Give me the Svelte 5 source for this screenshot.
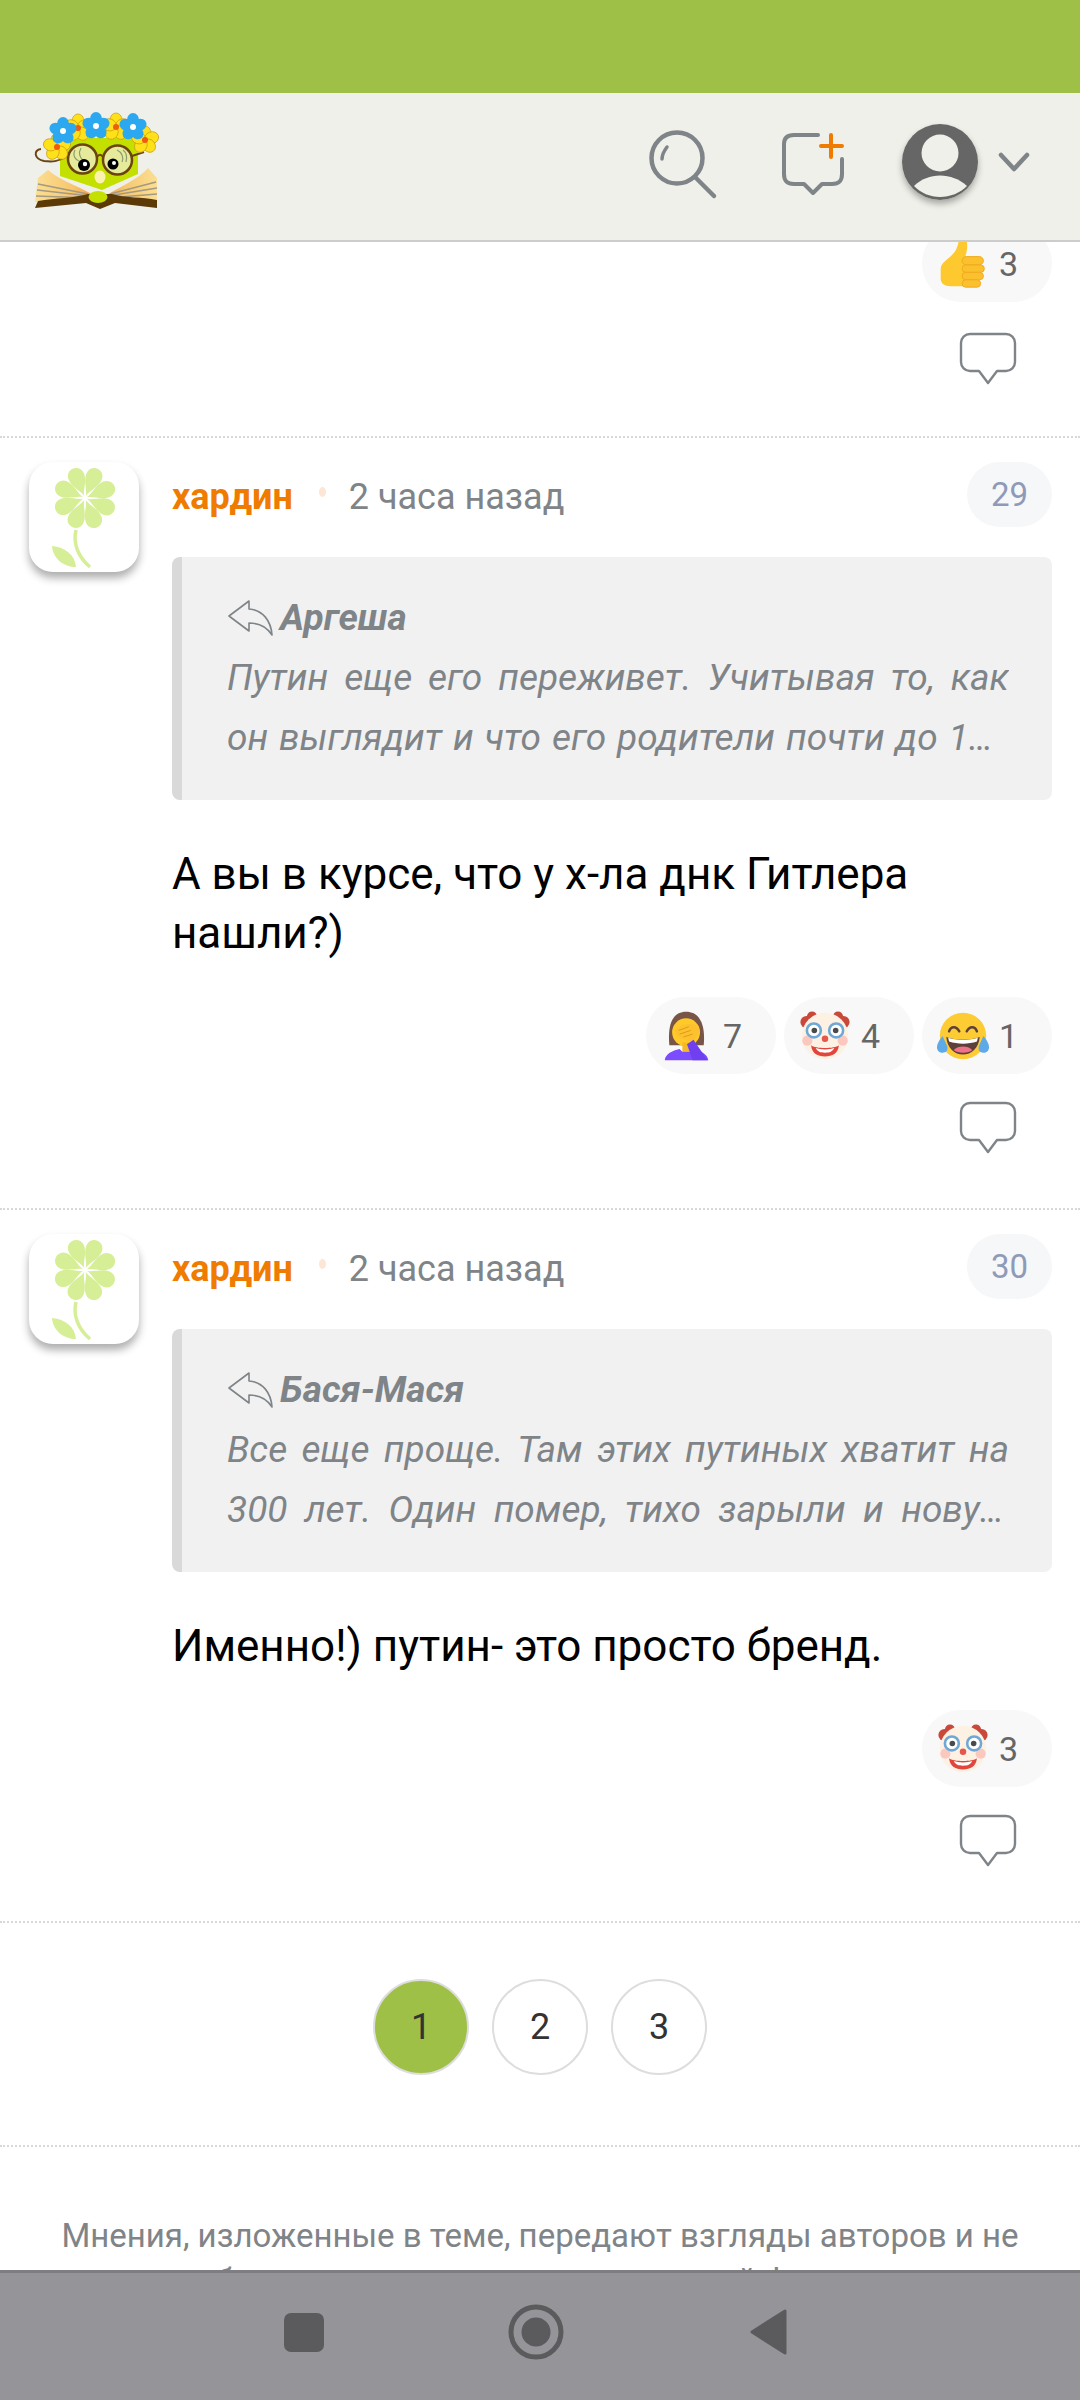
<script>
  const comments = [
    { id: 29, author: 'Аргеша', quote: 'Путин еще его переживет. Учитывая то, как он выглядит и что его родители почти до 100 лет дожили, ему еще долго', text: ['А вы в курсе, что у х-ла днк Гитлера', 'нашли?)'], chips: [['palm', 7], ['clown', 4], ['laugh', 1]] },
    { id: 30, author: 'Бася-Мася', quote: 'Все еще проще. Там этих путиных хватит на 300 лет. Один помер, тихо зарыли и новую копию поставили, никто и не заметит', text: ['Именно!) путин- это просто бренд.'], chips: [['clown', 3]] }
  ];
  const petals = [-22, 23, 68, 113, 158, 203, 248, 293];
  const five = [0, 72, 144, 216, 288];
  const yellow = [[58, 38], [96, 37], [125, 50], [37, 57]];
  const blue = [[43, 41], [76, 36], [113, 37]];
</script>

{#snippet bubble()}
  <svg class="bubble" width="58" height="54" viewBox="0 0 58 54" fill="none" stroke="#7f8488" stroke-width="2.4" stroke-linejoin="round">
    <path d="M11 2H47C52 2 56 6 56 11V30C56 35 52 39 47 39H38L29 51L20 39H11C6 39 2 35 2 30V11C2 6 6 2 11 2Z"/>
  </svg>
{/snippet}

{#snippet emoji(kind)}
  <svg class="emoji" width="52" height="52" viewBox="0 0 56 56">
    {#if kind === 'thumb'}
      <path d="M4 33C4 26 14 22 19 15C22 11 23 6 24 0H31C34 8 32 16 30 21H43V52H15C8 52 4 49 4 44Z" fill="#fdc92f"/>
      <rect x="27" y="20" width="23" height="9" rx="4.5" fill="#fbc02d" stroke="#f0a91e" stroke-width="1"/>
      <rect x="27" y="29" width="24" height="8" rx="4" fill="#fbc02d" stroke="#f0a91e" stroke-width="1"/>
      <rect x="27" y="37" width="23" height="8" rx="4" fill="#fbc02d" stroke="#f0a91e" stroke-width="1"/>
      <rect x="27" y="45" width="20" height="8" rx="4" fill="#fbc02d" stroke="#f0a91e" stroke-width="1"/>
    {:else if kind === 'palm'}
      <g transform="translate(4 2)">
        <path d="M5 36C3 14 8 0 23 0C38 0 44 14 42 36Z" fill="#795548"/>
        <ellipse cx="23" cy="22" rx="15" ry="15" fill="#ffca28"/>
        <rect x="19" y="33" width="8" height="10" fill="#f5b923"/>
        <path d="M0 52C1 45 8 42 16 40L19 43H27L30 40C40 42 46 46 47 52Z" fill="#7c4dff"/>
        <path d="M11 20C18 12 30 11 37 16C38 24 33 29 30 33L26 31C20 30 12 28 11 20Z" fill="#fdc02f"/>
        <path d="M24 35L31 30L46 52H30Z" fill="#7040f0"/>
        <path d="M15 20L26 16M16 24L28 20M20 27L30 24" stroke="#d89a10" stroke-width="1" fill="none"/>
      </g>
    {:else if kind === 'clown'}
      <circle cx="8" cy="13" r="6.500" fill="#c9483a"/><circle cx="14" cy="7" r="5.500" fill="#c9483a"/>
      <circle cx="48" cy="13" r="6.500" fill="#c9483a"/><circle cx="42" cy="7" r="5.500" fill="#c9483a"/>
      <circle cx="28" cy="28" r="25" fill="#fdf1e4"/>
      <circle cx="9" cy="33" r="5.5" fill="#fbc8c0"/><circle cx="47" cy="33" r="5.5" fill="#fbc8c0"/>
      <circle cx="16" cy="22" r="7.5" fill="#fff" stroke="#6fa8d4" stroke-width="2.8"/>
      <circle cx="40" cy="22" r="7.5" fill="#fff" stroke="#6fa8d4" stroke-width="2.8"/>
      <circle cx="16.500" cy="22" r="3" fill="#4a4a4a"/><circle cx="39.500" cy="22" r="3" fill="#4a4a4a"/>
      <circle cx="28" cy="31" r="3.500" fill="#e5574a"/>
      <path d="M13 38C18 42 38 42 43 38C42 47 36 50 28 50C20 50 14 47 13 38Z" fill="#e2453c"/>
      <path d="M18 41C23 43 33 43 38 41C36 45 33 46 28 46C23 46 20 45 18 41Z" fill="#fff"/>
    {:else}
      <circle cx="28" cy="28" r="25" fill="#fdcb34"/>
      <path d="M13 23C15 17 21 17 24 23M32 23C35 17 41 17 43 23" fill="none" stroke="#5d4037" stroke-width="2.6" stroke-linecap="round"/>
      <path d="M10 29C20 33 36 33 46 29C45 41 37 48 28 48C19 48 11 41 10 29Z" fill="#5d4037"/>
      <path d="M12 30C21 33 35 33 44 30L43 34C34 37 22 37 13 34Z" fill="#fff"/>
      <path d="M18 43C23 38 33 38 38 43C34 47 22 47 18 43Z" fill="#f0728a"/>
      <path d="M6 28C1 34 0 38 0 40C0 44 3 46 6 46C10 46 12 43 11 39Z" fill="#5ea9e8"/>
      <path d="M50 28C55 34 56 38 56 40C56 44 53 46 50 46C46 46 44 43 45 39Z" fill="#5ea9e8"/>
    {/if}
  </svg>
{/snippet}

{#snippet chip(kind, n)}
  <div class="chip">{@render emoji(kind)}<span>{n}</span></div>
{/snippet}

{#snippet flower(x, y, fill, stroke, mid, r)}
  <g transform="translate({x} {y})">
    {#each five as a}
      <ellipse transform="rotate({a}) translate(0 -7)" rx="6" ry="7" {fill} {stroke} stroke-width=".7"/>
    {/each}
    <circle {r} fill={mid}/>
  </g>
{/snippet}

<div class="page">
  <div class="status"></div>
  <header>
    <svg class="logo" width="160" height="130" viewBox="0 0 160 130">
      <defs>
        <linearGradient id="pl" x1="0" x2="1"><stop offset="0" stop-color="#fbdf94"/><stop offset=".6" stop-color="#f8c66e"/><stop offset="1" stop-color="#f59a3e"/></linearGradient>
        <linearGradient id="pr" x1="1" x2="0"><stop offset="0" stop-color="#fbdf94"/><stop offset=".6" stop-color="#f8c66e"/><stop offset="1" stop-color="#f59a3e"/></linearGradient>
      </defs>
      <path d="M40 48H118V84L82 100L40 86Z" fill="#c4e000"/>
      <path d="M15 112L18 88L28 80C42 92 60 96 78 108Z" fill="url(#pl)"/>
      <path d="M137 110V88L128 78C118 90 100 96 82 108Z" fill="url(#pr)"/>
      <path d="M18 94L68 104M17 100L70 106M16 106L70 108M136 92L90 104M137 98L88 106M137 104L88 108" stroke="#a39a80" stroke-width="1.6"/>
      <path d="M15 118L18 111C35 108 55 108 68 104L92 104C105 108 122 107 137 110V118L95 113L80 119L66 113Z" fill="#5b3a07"/>
      <ellipse cx="78" cy="107" rx="9.500" ry="6" fill="#c4e000"/>
      <ellipse cx="80" cy="87" rx="5.500" ry="6.500" fill="#faf2ad"/>
      <path d="M47 66C38 72 32 72 24 71C14 69 13 60 21 59" fill="none" stroke="#6b4410" stroke-width="2"/>
      <circle cx="62.500" cy="69" r="14.500" fill="#e6eb9c" stroke="#6b4410" stroke-width="2.500"/>
      <circle cx="97.500" cy="70" r="14.500" fill="#e6eb9c" stroke="#6b4410" stroke-width="2.500"/>
      <path d="M77 67C79 64 81 64 83 67M112 66L124 62" fill="none" stroke="#6b4410" stroke-width="2"/>
      <path d="M55 60C52 66 56 70 59 71M61 58C58 63 60 68 63 70M97 60C102 62 104 68 102 72M103 60C107 63 107 68 106 72" fill="none" stroke="#8d9c6c" stroke-width="1.200"/>
      <circle cx="64" cy="75" r="6" fill="#000"/><circle cx="65" cy="74" r="2.200" fill="#fff"/>
      <circle cx="93" cy="74" r="5.500" fill="#000"/><circle cx="94" cy="73" r="2" fill="#fff"/>
      {#each yellow as f}{@render flower(f[0], f[1], '#ffe11a', '#c79b12', '#ef5b10', 3)}{/each}
      {#each blue as f}{@render flower(f[0], f[1], '#2ba8f0', 'none', '#fff', 3)}{/each}
    </svg>
    <div class="actions">
      <svg class="search" width="72" height="72" viewBox="0 0 72 72" fill="none" stroke="#7f8488" stroke-width="4.500" stroke-linecap="round">
        <circle cx="30" cy="30" r="25.500"/>
        <path d="M49 50L67 68"/>
        <path d="M20 19C17 23 15 27 15 31" stroke-width="3.500"/>
      </svg>
      <svg class="add" width="66" height="66" viewBox="0 0 66 66" fill="none" stroke-linecap="round" stroke-linejoin="round">
        <path d="M37 4H13C6 4 3 7 3 13V43C3 50 6 53 13 53H23L32 62L41 53H51C58 53 61 50 61 43V28" stroke="#7f8488" stroke-width="4"/>
        <path d="M40 15H61M50 4V26" stroke="#ef7b00" stroke-width="4"/>
      </svg>
      <div class="me">
        <svg width="76" height="76" viewBox="0 0 76 76">
          <circle cx="38" cy="38" r="38" fill="#666"/>
          <circle cx="38" cy="29" r="18.500" fill="#eff0e9"/>
          <path d="M12 62C26 48 50 48 65 62C58 69 48 73 38 73C28 73 19 69 12 62Z" fill="#eff0e9"/>
        </svg>
      </div>
      <svg class="chev" width="32" height="24" viewBox="0 0 32 24" fill="none" stroke="#7f8488" stroke-width="4.500" stroke-linecap="round" stroke-linejoin="round">
        <path d="M3 4L16 18L29 4"/>
      </svg>
    </div>
  </header>

  <main>
    <section class="lead">
      <div class="chips">{@render chip('thumb', 3)}</div>
      <div class="reply">{@render bubble()}</div>
    </section>

    {#each comments as c}
      <article>
        <div class="avatar">
          <svg width="110" height="110" viewBox="0 0 110 110">
            <g transform="translate(56 36) scale(1.06)" fill="#d6ee96">
              {#each petals as a}
                <path transform="rotate({a})" d="M0 -2C-1 -8 -7.800 -14 -7.800 -22C-7.800 -27 -4 -30 0 -30C4 -30 7.800 -27 7.800 -22C7.800 -14 1 -8 0 -2Z"/>
              {/each}
            </g>
            <path d="M47 68C44 80 48 94 61 105" fill="none" stroke="#d6ee96" stroke-width="3.500"/>
            <path d="M23 84C36 85 46 93 47 105C35 105 24 97 23 84Z" fill="#d6ee96"/>
          </svg>
        </div>
        <div class="content">
          <div class="meta">
            <b>хардин</b>
            <i class="dot"></i>
            <span class="time">2 часа назад</span>
            <span class="num">{c.id}</span>
          </div>
          <blockquote>
            <div class="who">
              <svg width="46" height="36" viewBox="0 0 46 36" fill="none" stroke="#7f8488" stroke-width="1.600" stroke-linejoin="round">
                <path d="M22 1L2 16L22 31V23C33 23 40 27 45 35C44 21 36 10 22 9Z"/>
              </svg>
              <span>{c.author}</span>
            </div>
            <p>{c.quote}</p>
          </blockquote>
          <div class="text">{#each c.text as l}<div>{l}</div>{/each}</div>
          <div class="chips">{#each c.chips as ch}{@render chip(ch[0], ch[1])}{/each}</div>
          <div class="reply">{@render bubble()}</div>
        </div>
      </article>
    {/each}

    <nav class="pager">
      <span class="on">1</span><span>2</span><span>3</span>
    </nav>
    <footer>Мнения, изложенные в теме, передают взгляды авторов и не обязательно совпадают с позицией форума</footer>
  </main>

  <div class="sys">
    <i class="sq"></i>
    <svg width="56" height="56" viewBox="0 0 56 56"><circle cx="28" cy="28" r="25" fill="none" stroke="#5b5b5d" stroke-width="5"/><circle cx="28" cy="28" r="14.500" fill="#5b5b5d"/></svg>
    <svg width="40" height="48" viewBox="0 0 40 48"><path d="M36 3V45L3 24Z" fill="#5b5b5d" stroke="#5b5b5d" stroke-width="3" stroke-linejoin="round"/></svg>
  </div>
</div>

<style>
  :global(body) { margin: 0; background: #fff; }
  .page { width: 1080px; height: 2400px; display: flex; flex-direction: column; overflow: hidden; font-family: Roboto, "Noto Sans", sans-serif; }
  .status { height: 93px; background: #9fc046; flex: none; }
  header { height: 147px; flex: none; background: #eff0e9; border-bottom: 2px solid #ccc; display: flex; align-items: flex-start; position: relative; z-index: 2; }
  .logo { margin: -3px 0 0 20px; }
  .actions { margin-left: auto; display: flex; align-items: flex-start; }
  .search { margin-top: 35px; }
  .add { margin: 38px 0 0 62px; }
  .me { width: 76px; height: 76px; margin: 31px 0 0 55px; border-radius: 50%; box-shadow: 0 4px 6px rgba(0,0,0,.3); }
  .me svg { display: block; }
  .chev { margin: 58px 50px 0 20px; }
  main { flex: 1; min-height: 0; overflow: hidden; }
  .lead { height: 195px; padding: 0 28px 16px 0; box-sizing: content-box; }
  .lead .chips { margin-top: -17px; }
  .lead .reply { margin-top: 30px; }
  article { border-top: 2px dotted #d8d8d8; padding: 24px 28px 0 29px; display: flex; box-sizing: border-box; }
  .avatar { width: 110px; height: 110px; flex: none; background: #fff; border-radius: 24px; box-shadow: 0 6px 9px rgba(0,0,0,.32); }
  .avatar svg { display: block; }
  .content { margin-left: 33px; flex: 1; min-width: 0; padding-bottom: 53px; }
  .meta { height: 65px; display: flex; align-items: center; font-size: 36px; }
  .meta b { color: #ef7b00; font-weight: 700; padding-top: 4px; }
  .dot { width: 7px; height: 10px; border-radius: 50%; background: #fde6d6; margin: -6px 0 0 26px; }
  .time { color: #7f8488; margin-left: 23px; padding-top: 4px; }
  .num { margin-left: auto; width: 85px; height: 65px; border-radius: 33px; background: #f6f7f9; color: #8f9ab8; font-size: 33px; display: flex; align-items: center; justify-content: center; }
  blockquote { margin: 30px 0 0; height: 243px; box-sizing: border-box; background: #f1f1f1; border-left: 10px solid #d9d9d9; border-radius: 8px; padding: 31px 43px 0 45px; color: #7f8488; font-style: italic; font-size: 37px; line-height: 60px; }
  .who { display: flex; align-items: center; height: 60px; font-weight: 700; }
  .who svg { margin-right: 7px; }
  blockquote p { margin: 0; text-align: justify; display: -webkit-box; -webkit-box-orient: vertical; -webkit-line-clamp: 2; line-clamp: 2; overflow: hidden; }
  .text { margin-top: 45px; font-size: 44px; line-height: 59px; color: #000; }
  .chips { margin-top: 34px; display: flex; justify-content: flex-end; gap: 8px; }
  .chip { position: relative; width: 130px; height: 77px; box-sizing: border-box; border-radius: 39px; background: #f8f8f8; display: flex; align-items: center; padding-left: 15px; color: #666; font-size: 34px; }
  .chip span { margin-left: 10px; }
  .reply { margin-top: 27px; display: flex; justify-content: flex-end; padding-right: 35px; height: 54px; }
  .bubble { display: block; }
  .pager { border-top: 2px dotted #d8d8d8; border-bottom: 2px dotted #d8d8d8; height: 226px; box-sizing: border-box; padding-bottom: 14px; display: flex; justify-content: center; align-items: center; gap: 23px; }
  .pager span { width: 96px; height: 96px; box-sizing: border-box; border: 2px solid #ddd; border-radius: 50%; display: flex; align-items: center; justify-content: center; font-size: 36px; color: #333; }
  .pager .on { background: #9fc046; }
  footer { padding: 66px 40px 0; text-align: center; font-size: 33px; line-height: 45px; color: #7f8488; }
  .sys { height: 130px; flex: none; box-sizing: border-box; background: #959599; border-top: 3px solid #7d7d82; display: flex; align-items: center; position: relative; z-index: 2; padding: 0 0 9px 284px; }
  .sq { width: 40px; height: 39px; border-radius: 7px; background: #5b5b5d; }
  .sys svg:nth-child(2) { margin-left: 184px; }
  .sys svg:nth-child(3) { margin-left: 185px; }
</style>
